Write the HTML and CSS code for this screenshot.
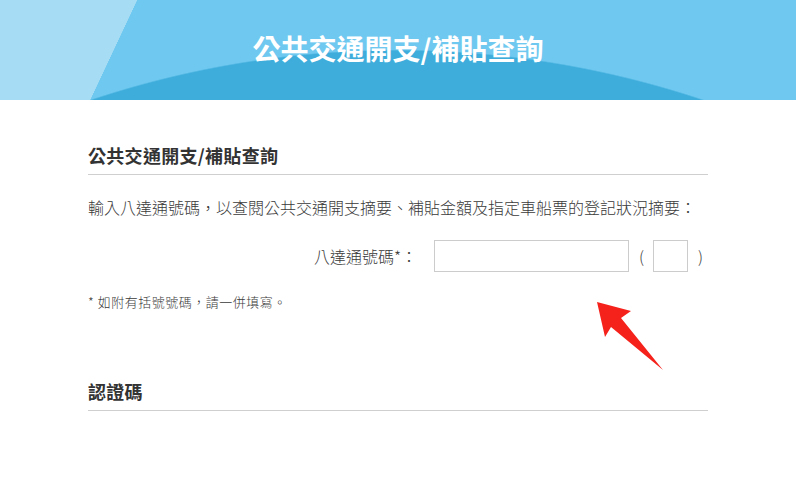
FILE: index.html
```html
<!DOCTYPE html>
<html lang="zh-Hant">
<head>
<meta charset="utf-8">
<title>公共交通開支/補貼查詢</title>
<link rel="stylesheet" href="styles.css">
</head>
<body>
<header class="banner">
  <h1 class="banner-title">公共交通開支/補貼查詢</h1>
</header>
<main class="content">
  <h2 class="section-title">公共交通開支/補貼查詢</h2>
  <p class="intro">輸入八達通號碼，以查閱公共交通開支摘要、補貼金額及指定車船票的登記狀況摘要：</p>
  <div class="form-row">
    <label class="form-label" for="octopus">八達通號碼*：</label>
    <input class="field-main" id="octopus" type="text">
    <span class="paren">(</span>
    <input class="field-check" type="text">
    <span class="paren paren-close">)</span>
  </div>
  <p class="note">* 如附有括號號碼，請一併填寫。</p>
  <h2 class="section-title section-second">認證碼</h2>
</main>
<svg class="arrow" width="80" height="80" viewBox="590 295 80 80" aria-hidden="true">
  <polygon points="597,302 631,311 621,318 663,370 611,327 605,337" fill="#f5221c"/>
</svg>
</body>
</html>
```
FILE: styles.css
```css
html, body {
  margin: 0;
  padding: 0;
  background: #ffffff;
}
body {
  font-family: "Noto Sans CJK TC", "Noto Sans", "Liberation Sans", sans-serif;
  color: #333333;
  position: relative;
  min-height: 483px;
  overflow: hidden;
}
.banner {
  height: 100px;
  display: flex;
  align-items: center;
  justify-content: center;
  background-color: #6fc8ef;
  background-image:
    radial-gradient(circle 967px at 397px 1017px, #3eaddb 966px, rgba(62,173,219,0) 967.5px),
    linear-gradient(to bottom right, #a6dcf4 50%, rgba(166,220,244,0) 50.5%),
    linear-gradient(#a6dcf4, #a6dcf4);
  background-repeat: no-repeat;
  background-size: 100% 100%, 47px 100px, 90px 100px;
  background-position: 0 0, 90px 0, 0 0;
}
.banner-title {
  margin: 0;
  padding-bottom: 2px;
  font-size: 28px;
  font-weight: 700;
  color: #ffffff;
  line-height: 1.2;
}
.content {
  width: 620px;
  margin: 0 auto;
}
.section-title {
  margin: 42px 0 0;
  font-size: 18px;
  line-height: 26px;
  letter-spacing: 0.3px;
  font-weight: 700;
  color: #333333;
  padding-bottom: 6px;
  border-bottom: 1px solid #cfcfcf;
}
.intro {
  margin: 20px 0 0;
  font-size: 16px;
  line-height: 24px;
  font-weight: 300;
  color: #3a3a3a;
}
.form-row {
  margin-top: 21px;
  display: flex;
  align-items: center;
  height: 32px;
}
.form-label {
  width: 329px;
  text-align: right;
  font-size: 16px;
  font-weight: 300;
  color: #3a3a3a;
}
.field-main {
  margin: 0 0 0 17px;
  width: 195px;
  height: 32px;
  box-sizing: border-box;
  border: 1px solid #cccccc;
  background: #ffffff;
  padding: 0;
}
.field-check {
  margin: 0 0 0 9px;
  width: 35px;
  height: 32px;
  box-sizing: border-box;
  border: 1px solid #cccccc;
  background: #ffffff;
  padding: 0;
}
.paren {
  margin-left: 10px;
  font-size: 16px;
  font-weight: 300;
  color: #3a3a3a;
}
.paren-close {
  margin-left: 10px;
}
.note {
  margin: 21px 0 0;
  font-size: 13px;
  line-height: 18px;
  letter-spacing: 0.5px;
  font-weight: 300;
  color: #3a3a3a;
}
.section-second {
  margin-top: 67px;
  padding-bottom: 6px;
}
.arrow {
  position: absolute;
  left: 590px;
  top: 295px;
}
```
